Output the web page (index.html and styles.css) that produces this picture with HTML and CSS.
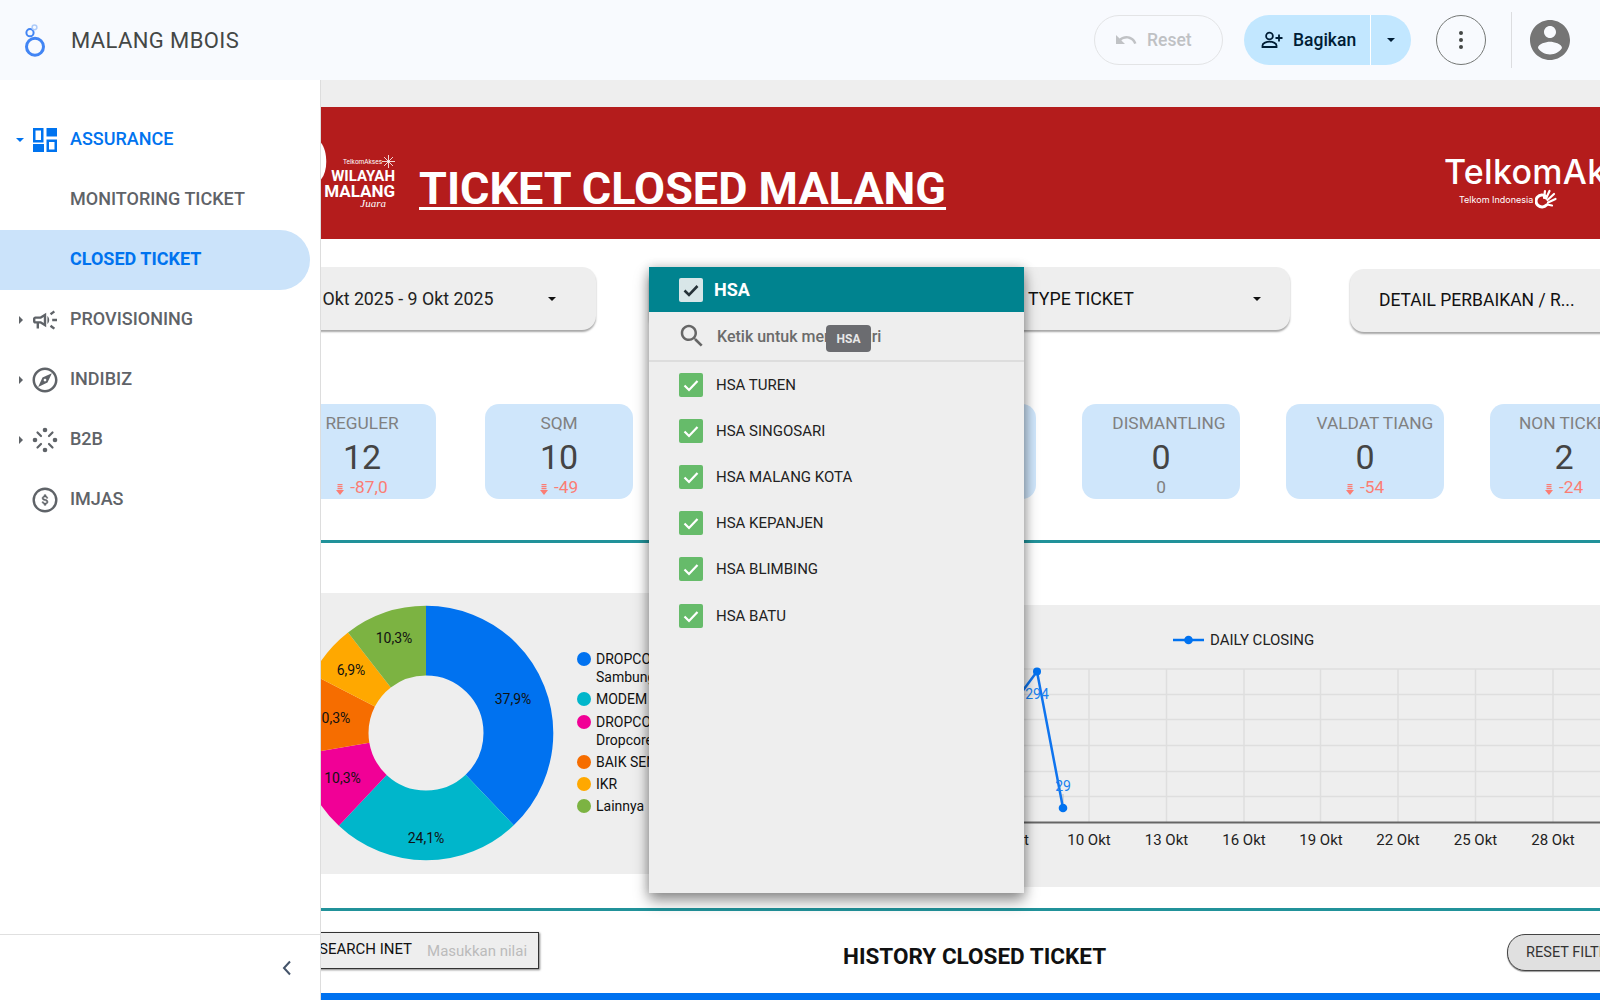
FILE: index.html
```html
<!DOCTYPE html>
<html lang="id">
<head>
    <meta charset="UTF-8">
    <title>MALANG MBOIS</title>
    <link rel="stylesheet" href="styles.css">
</head>
<body>
    <header class="topbar">
        <svg class="app-logo" viewBox="0 0 40 40" width="40" height="40">
            <circle cx="20" cy="26.700" r="8.500" fill="none" stroke="#4285f4" stroke-width="3"/>
            <circle cx="15" cy="12.700" r="3.600" fill="none" stroke="#4285f4" stroke-width="2"/>
            <circle cx="19.500" cy="7.300" r="2.400" fill="none" stroke="#aecbfa" stroke-width="1.500"/>
        </svg>
        <div class="app-title">MALANG MBOIS</div>
        <div class="topbar-actions">
            <button class="btn-reset">
                <svg viewBox="0 0 24 24" width="24" height="24"><path fill="#c0c2c5" d="M12.500 8c-2.650 0-5.050.99-6.900 2.600L2 7v9h9l-3.620-3.620c1.390-1.160 3.160-1.880 5.120-1.880 3.540 0 6.550 2.310 7.600 5.500l2.370-.78C21.080 11.030 17.150 8 12.500 8z"/></svg>
                Reset
            </button>
            <div class="btn-share">
                <div class="share-main">
                    <svg viewBox="0 0 24 24" width="24" height="24" fill="none" stroke="#001d35" stroke-width="1.800">
                        <circle cx="9.500" cy="8" r="3.400"/>
                        <path d="M2.500 19v-1.600c0-2.400 4.400-3.700 7-3.700s7 1.300 7 3.700V19z"/>
                        <path d="M19 6.500v7M15.500 10h7"/>
                    </svg>
                    Bagikan
                </div>
                <div class="share-more"><span class="caret-down caret-dark"></span></div>
            </div>
            <div class="btn-menu"><span></span><span></span><span></span></div>
            <div class="topbar-sep"></div>
            <svg class="avatar" viewBox="0 0 24 24" width="48" height="48"><path fill="#757575" d="M12 2C6.480 2 2 6.480 2 12s4.480 10 10 10 10-4.480 10-10S17.520 2 12 2zm0 3c1.660 0 3 1.340 3 3s-1.340 3-3 3-3-1.340-3-3 1.340-3 3-3zm0 14.200c-2.500 0-4.710-1.280-6-3.220.03-1.990 4-3.080 6-3.080 1.990 0 5.970 1.090 6 3.080-1.290 1.940-3.500 3.220-6 3.220z"/></svg>
        </div>
    </header>

    <div class="main">
        <aside class="sidebar">
            <nav class="nav">
                <div class="nav-item active">
                    <span class="nav-caret"><span class="caret-down"></span></span>
                    <svg class="nav-icon" viewBox="0 0 24 24" width="24" height="24" fill="#0073ef">
                        <path fill-rule="evenodd" d="M0 0h10.500v14.500H0zM2.500 2.500v9.500h5.500V2.500z"/>
                        <path d="M13.500 0H24v8.500H13.500z"/>
                        <path d="M0 16h11v8H0z"/>
                        <path fill-rule="evenodd" d="M13.500 11.500H24V24H13.500zM16 14v7.500h5.500V14z"/>
                    </svg>
                    <span class="nav-label">ASSURANCE</span>
                </div>
                <div class="nav-item sub"><span class="nav-label">MONITORING TICKET</span></div>
                <div class="nav-item sub selected"><span class="nav-label">CLOSED TICKET</span></div>
                <div class="nav-item">
                    <span class="nav-caret"><span class="caret-right"></span></span>
                    <svg class="nav-icon" viewBox="0 0 24 24" width="24" height="24"><path fill="#5f6368" transform="translate(-2.400 -2.400) scale(1.200)" d="M18 11v2h4v-2h-4zm-2 6.610c.96.71 2.210 1.650 3.200 2.390.4-.53.8-1.070 1.200-1.600-.99-.74-2.240-1.680-3.200-2.400-.4.54-.8 1.080-1.200 1.610zM20.400 5.600c-.4-.53-.8-1.070-1.200-1.600-.99.74-2.240 1.680-3.200 2.400.4.53.8 1.070 1.200 1.600.96-.72 2.210-1.650 3.200-2.400zM4 9c-1.100 0-2 .9-2 2v2c0 1.100.9 2 2 2h1v4h2v-4h1l5 3V6L8 9H4zm5.030 1.710L11 9.530v4.940l-1.970-1.180-.48-.29H4v-2h4.550l.48-.29zM15.500 12c0-1.330-.58-2.530-1.500-3.350v6.690c.92-.81 1.500-2.010 1.500-3.340z"/></svg>
                    <span class="nav-label">PROVISIONING</span>
                </div>
                <div class="nav-item">
                    <span class="nav-caret"><span class="caret-right"></span></span>
                    <svg class="nav-icon" viewBox="0 0 24 24" width="24" height="24"><path fill="#5f6368" transform="translate(-3 -3) scale(1.250)" d="M12 2C6.480 2 2 6.480 2 12s4.480 10 10 10 10-4.480 10-10S17.520 2 12 2zm0 18c-4.410 0-8-3.590-8-8s3.590-8 8-8 8 3.590 8 8-3.590 8-8 8zm-5.500-2.500l7.510-3.490L17.500 6.500 9.990 9.990 6.500 17.500zm5.500-6.600c.61 0 1.100.49 1.100 1.100s-.49 1.100-1.100 1.100-1.100-.49-1.100-1.100.49-1.100 1.100-1.100z"/></svg>
                    <span class="nav-label">INDIBIZ</span>
                </div>
                <div class="nav-item">
                    <span class="nav-caret"><span class="caret-right"></span></span>
                    <svg class="nav-icon" viewBox="0 0 24 24" width="24" height="24" fill="#5f6368" stroke="#5f6368" stroke-width="2.200" stroke-linecap="round">
                        <circle cx="12" cy="2" r="2.300" stroke="none"/>
                        <circle cx="22" cy="12" r="2.300" stroke="none"/>
                        <circle cx="12" cy="22" r="2.300" stroke="none"/>
                        <circle cx="2" cy="12" r="2.300" stroke="none"/>
                        <path d="M8 8L4.500 4.500M16 8l3.500-3.500M16 16l3.500 3.500M8 16l-3.500 3.500" fill="none"/>
                    </svg>
                    <span class="nav-label">B2B</span>
                </div>
                <div class="nav-item">
                    <span class="nav-caret"></span>
                    <svg class="nav-icon" viewBox="0 0 24 24" width="24" height="24" fill="#5f6368">
                        <circle cx="12" cy="12" r="11.300" fill="none" stroke="#5f6368" stroke-width="2.400"/>
                        <path transform="translate(3 3) scale(.75)" stroke="#5f6368" stroke-width=".7" d="M12.310 11.140c-1.770-.45-2.340-.94-2.340-1.670 0-.84.79-1.430 2.100-1.430 1.380 0 1.900.66 1.940 1.640h1.710c-.05-1.340-.87-2.570-2.490-2.970V5h-2.300v1.700c-1.530.33-2.750 1.320-2.750 2.840 0 1.820 1.510 2.730 3.720 3.260 1.980.47 2.380 1.170 2.380 1.900 0 .54-.39 1.400-2.100 1.400-1.600 0-2.230-.72-2.320-1.640H8.040c.1 1.700 1.360 2.660 2.860 2.970V19h2.340v-1.670c1.520-.29 2.720-1.160 2.730-2.770-.01-2.200-1.900-2.960-3.660-3.420z"/>
                    </svg>
                    <span class="nav-label">IMJAS</span>
                </div>
            </nav>
            <div class="sidebar-foot">
                <svg viewBox="0 0 12 16" width="12" height="16" fill="none" stroke="#44546a" stroke-width="2"><path d="M9 1.500L3 8l6 6.500"/></svg>
            </div>
        </aside>

        <section class="canvas">
            <div class="report">
                <div class="banner">
                    <div class="wil-logo">
                        <svg class="wil-swoosh" viewBox="0 0 8 42" width="7" height="42"><path fill="#fff" d="M0 0c4 5 6 13 6 22 0 8-2 15-6 20z"/></svg>
                        <div class="wil-top">TelkomAkses
                            <svg viewBox="0 0 16 16" width="13" height="13" stroke="#fff" stroke-width="1"><path d="M8 0v16M0 8h16M2.500 2.500l11 11M13.500 2.500l-11 11"/></svg>
                        </div>
                        <div class="wil-a">WILAYAH</div>
                        <div class="wil-b">MALANG</div>
                        <div class="wil-c">Juara</div>
                    </div>
                    <h1 class="banner-title">TICKET CLOSED MALANG</h1>
                    <div class="ta-logo">
                        <div class="ta-name">TelkomAkses</div>
                        <div class="ta-sub">Telkom Indonesia
                            <svg viewBox="0 0 22 20" width="22" height="20" fill="none" stroke="#fff" stroke-linecap="round">
                                <path stroke-width="3" d="M11 7.500A6 6 0 1 0 11.500 16"/>
                                <path stroke-width="2.200" d="M9 9l1-7M11 9.500L14.500 2M12.500 11L19 5M13 13.500l7.500-3.500M12 15.500l5 1"/>
                            </svg>
                        </div>
                    </div>
                </div>

                <div class="filters">
                    <div class="filter filter-date">
                        <span class="filter-text">1 Okt 2025 - 9 Okt 2025</span>
                        <span class="caret-down caret-black"></span>
                    </div>
                    <div class="filter filter-hsa"></div>
                    <div class="filter filter-type">
                        <span class="filter-text">TYPE TICKET</span>
                        <span class="caret-down caret-black"></span>
                    </div>
                    <div class="filter filter-detail">
                        <span class="filter-text">DETAIL PERBAIKAN / R...</span>
                    </div>
                </div>

                <div class="kpis">
                    <div class="kpi kpi-first">
                        <div class="kpi-title">REGULER</div>
                        <div class="kpi-num">12</div>
                        <div class="kpi-delta"><svg class="down-arrow" viewBox="0 0 8 11" width="8" height="11"><path d="M1.500 0h5v1.200h-5zM1.500 2h5v1.200h-5zM1.500 4h5v1.200h-5zM0 6h8l-4 5z"/></svg>-87,0</div>
                    </div>
                    <div class="kpi">
                        <div class="kpi-title">SQM</div>
                        <div class="kpi-num">10</div>
                        <div class="kpi-delta"><svg class="down-arrow" viewBox="0 0 8 11" width="8" height="11"><path d="M1.500 0h5v1.200h-5zM1.500 2h5v1.200h-5zM1.500 4h5v1.200h-5zM0 6h8l-4 5z"/></svg>-49</div>
                    </div>
                    <div class="kpi"></div>
                    <div class="kpi kpi-wide kpi-hidden"></div>
                    <div class="kpi kpi-wide">
                        <div class="kpi-title shift-a">DISMANTLING</div>
                        <div class="kpi-num">0</div>
                        <div class="kpi-delta flat">0</div>
                    </div>
                    <div class="kpi kpi-wide">
                        <div class="kpi-title shift-b">VALDAT TIANG</div>
                        <div class="kpi-num">0</div>
                        <div class="kpi-delta"><svg class="down-arrow" viewBox="0 0 8 11" width="8" height="11"><path d="M1.500 0h5v1.200h-5zM1.500 2h5v1.200h-5zM1.500 4h5v1.200h-5zM0 6h8l-4 5z"/></svg>-54</div>
                    </div>
                    <div class="kpi">
                        <div class="kpi-title shift-c">NON TICKET</div>
                        <div class="kpi-num">2</div>
                        <div class="kpi-delta"><svg class="down-arrow" viewBox="0 0 8 11" width="8" height="11"><path d="M1.500 0h5v1.200h-5zM1.500 2h5v1.200h-5zM1.500 4h5v1.200h-5zM0 6h8l-4 5z"/></svg>-24</div>
                    </div>
                </div>

                <div class="divider divider-a"></div>

                <div class="charts">
                    <div class="panel panel-pie">
                        <svg class="pie" viewBox="0 0 260 260" width="260" height="260">
                            <g transform="rotate(-90 130 130)" fill="none" stroke-width="69.800">
                                <circle cx="130" cy="130" r="92.400" pathLength="100" stroke="#0072f0" stroke-dasharray="37.900 62.100"/>
                                <circle cx="130" cy="130" r="92.400" pathLength="100" stroke="#00b6cb" stroke-dasharray="24.100 75.900" stroke-dashoffset="-37.900"/>
                                <circle cx="130" cy="130" r="92.400" pathLength="100" stroke="#f10096" stroke-dasharray="10.300 89.700" stroke-dashoffset="-62"/>
                                <circle cx="130" cy="130" r="92.400" pathLength="100" stroke="#f66d00" stroke-dasharray="10.300 89.700" stroke-dashoffset="-72.300"/>
                                <circle cx="130" cy="130" r="92.400" pathLength="100" stroke="#ffa800" stroke-dasharray="6.900 93.100" stroke-dashoffset="-82.600"/>
                                <circle cx="130" cy="130" r="92.400" pathLength="100" stroke="#7cb342" stroke-dasharray="10.500 89.500" stroke-dashoffset="-89.500"/>
                            </g>
                            <g class="pie-label">
                                <text x="217" y="101">37,9%</text>
                                <text x="130" y="240">24,1%</text>
                                <text x="46.500" y="180">10,3%</text>
                                <text x="36" y="120">10,3%</text>
                                <text x="55" y="72">6,9%</text>
                                <text x="98" y="40">10,3%</text>
                            </g>
                        </svg>
                        <ul class="legend">
                            <li><i class="dot c1"></i><span>DROPCORE<br>Sambungan</span></li>
                            <li><i class="dot c2"></i><span>MODEM</span></li>
                            <li><i class="dot c3"></i><span>DROPCORE<br>Dropcore</span></li>
                            <li><i class="dot c4"></i><span>BAIK SENDIRI</span></li>
                            <li><i class="dot c5"></i><span>IKR</span></li>
                            <li><i class="dot c6"></i><span>Lainnya</span></li>
                        </ul>
                    </div>
                    <div class="panel panel-line">
                        <svg class="line-chart" viewBox="971 605 629 282" width="629" height="282">
                            <g stroke="#dedede" stroke-width="1.500">
                                <path d="M971 669H1600M971 694.500H1600M971 719.500H1600M971 745.500H1600M971 771.500H1600M971 796.500H1600"/>
                                <path d="M1011.500 669V822M1089 669V822M1166.500 669V822M1244 669V822M1320.500 669V822M1398 669V822M1475.500 669V822M1553 669V822"/>
                            </g>
                            <path d="M971 822.500H1600" stroke="#666" stroke-width="2"/>
                            <path d="M1063 794V803" stroke="#bbb" stroke-width="1"/>
                            <path d="M1011.500 706L1037 671.500L1063 808" fill="none" stroke="#0f74ee" stroke-width="2.500"/>
                            <circle cx="1037" cy="671.500" r="4" fill="#0072f0"/>
                            <circle cx="1063" cy="808" r="4.300" fill="#0072f0"/>
                            <text class="point-label" x="1037" y="699">294</text>
                            <text class="point-label" x="1063" y="791">29</text>
                            <path d="M1173 640H1204" stroke="#0072f0" stroke-width="2.500"/>
                            <circle cx="1188.500" cy="640" r="4.300" fill="#0072f0"/>
                            <text class="line-legend" x="1210" y="645">DAILY CLOSING</text>
                            <g class="tick-label">
                                <text x="1011.500" y="845">7 Okt</text>
                                <text x="1089" y="845">10 Okt</text>
                                <text x="1166.500" y="845">13 Okt</text>
                                <text x="1244" y="845">16 Okt</text>
                                <text x="1321" y="845">19 Okt</text>
                                <text x="1398" y="845">22 Okt</text>
                                <text x="1475.500" y="845">25 Okt</text>
                                <text x="1553" y="845">28 Okt</text>
                            </g>
                        </svg>
                    </div>
                </div>

                <div class="divider divider-b"></div>

                <div class="history-row">
                    <div class="search-inet">
                        <span class="search-label">SEARCH INET</span>
                        <span class="search-hint">Masukkan nilai</span>
                    </div>
                    <h2 class="history-title">HISTORY CLOSED TICKET</h2>
                    <div class="btn-reset-filter">RESET FILTER</div>
                </div>

                <div class="table-head"></div>
            </div>

            <div class="dropdown">
                <div class="dd-head">
                    <span class="check check-head">
                        <svg viewBox="0 0 24 24" width="24" height="24" fill="none" stroke="#263238" stroke-width="2.600"><path d="M5.500 12.500l4.500 4.500 8.500-9"/></svg>
                    </span>
                    <span class="dd-head-label">HSA</span>
                </div>
                <div class="dd-search">
                    <svg viewBox="0 0 24 24" width="30" height="30"><path fill="#666" d="M15.500 14h-.79l-.28-.27C15.410 12.590 16 11.110 16 9.500 16 5.910 13.090 3 9.500 3S3 5.910 3 9.500 5.910 16 9.500 16c1.610 0 3.090-.59 4.230-1.570l.27.28v.79l5 4.990L20.490 19l-4.990-5zm-6 0C7.010 14 5 11.990 5 9.500S7.010 5 9.500 5 14 7.010 14 9.500 11.990 14 9.500 14z"/></svg>
                    <span class="dd-search-hint">Ketik untuk menelusuri</span>
                </div>
                <div class="dd-row"><span class="check"><svg viewBox="0 0 24 24" width="24" height="24" fill="none" stroke="#fff" stroke-width="2.200"><path d="M5.500 12.500l4.500 4.500 8.500-9"/></svg></span>HSA TUREN</div>
                <div class="dd-row"><span class="check"><svg viewBox="0 0 24 24" width="24" height="24" fill="none" stroke="#fff" stroke-width="2.200"><path d="M5.500 12.500l4.500 4.500 8.500-9"/></svg></span>HSA SINGOSARI</div>
                <div class="dd-row"><span class="check"><svg viewBox="0 0 24 24" width="24" height="24" fill="none" stroke="#fff" stroke-width="2.200"><path d="M5.500 12.500l4.500 4.500 8.500-9"/></svg></span>HSA MALANG KOTA</div>
                <div class="dd-row"><span class="check"><svg viewBox="0 0 24 24" width="24" height="24" fill="none" stroke="#fff" stroke-width="2.200"><path d="M5.500 12.500l4.500 4.500 8.500-9"/></svg></span>HSA KEPANJEN</div>
                <div class="dd-row"><span class="check"><svg viewBox="0 0 24 24" width="24" height="24" fill="none" stroke="#fff" stroke-width="2.200"><path d="M5.500 12.500l4.500 4.500 8.500-9"/></svg></span>HSA BLIMBING</div>
                <div class="dd-row"><span class="check"><svg viewBox="0 0 24 24" width="24" height="24" fill="none" stroke="#fff" stroke-width="2.200"><path d="M5.500 12.500l4.500 4.500 8.500-9"/></svg></span>HSA BATU</div>
                <div class="tooltip">HSA</div>
            </div>
        </section>
    </div>
</body>
</html>
```

FILE: styles.css
```css
* {
    box-sizing: border-box;
}
html, body {
    margin: 0;
    height: 100%;
    overflow: hidden;
}
body {
    font-family: Roboto, 'Liberation Sans', sans-serif;
    color: #222;
    background: #fff;
    display: flex;
    flex-direction: column;
}

/* top bar */
.topbar {
    height: 80px;
    flex: none;
    display: flex;
    align-items: center;
    padding: 0 26px 0 15px;
    background: #f8fafe;
}
.app-logo {
    flex: none;
}
.app-title {
    margin-left: 16px;
    font-size: 22px;
    letter-spacing: .4px;
    color: #444746;
}
.topbar-actions {
    margin-left: auto;
    display: flex;
    align-items: center;
}
.btn-reset {
    width: 129px;
    height: 50px;
    display: flex;
    align-items: center;
    gap: 9px;
    padding: 0 0 0 19px;
    background: none;
    border: 1px solid #e3e4e6;
    border-radius: 25px;
    font: 500 17.500px Roboto, sans-serif;
    color: #bfc1c4;
}
.btn-share {
    width: 167px;
    height: 50px;
    margin-left: 21px;
    display: flex;
    border-radius: 25px;
    overflow: hidden;
    background: #c2e7ff;
    color: #001d35;
    font-size: 17.500px;
    font-weight: 500;
}
.share-main {
    width: 127px;
    display: flex;
    align-items: center;
    gap: 9px;
    padding-left: 16px;
    border-right: 1px solid #fff;
}
.share-more {
    flex: 1;
    display: flex;
    align-items: center;
    justify-content: center;
}
.btn-menu {
    width: 50px;
    height: 50px;
    margin-left: 25px;
    display: flex;
    flex-direction: column;
    align-items: center;
    justify-content: center;
    gap: 3px;
    border: 1px solid #747775;
    border-radius: 50%;
}
.btn-menu span {
    width: 4px;
    height: 4px;
    border-radius: 50%;
    background: #444746;
}
.topbar-sep {
    width: 1px;
    height: 56px;
    margin: 0 14px 0 25px;
    background: #dcdde0;
}
.avatar {
    display: block;
}

/* carets */
.caret-down {
    display: inline-block;
    border-left: 4.500px solid transparent;
    border-right: 4.500px solid transparent;
    border-top: 4.500px solid #0073ef;
}
.caret-dark {
    border-top-color: #001d35;
}
.caret-black {
    border-top-color: #111;
}
.caret-right {
    display: inline-block;
    border-top: 4px solid transparent;
    border-bottom: 4px solid transparent;
    border-left: 4px solid #5f6368;
}

/* sidebar */
.main {
    flex: 1;
    display: flex;
    min-height: 0;
}
.sidebar {
    width: 321px;
    flex: none;
    display: flex;
    flex-direction: column;
    border-right: 1px solid #ddd;
    background: #fff;
}
.nav {
    padding-top: 30px;
}
.nav-item {
    width: 310px;
    height: 60px;
    display: flex;
    align-items: center;
    padding-left: 16px;
    color: #5f6368;
    font-size: 18px;
    font-weight: 500;
}
.nav-item.active {
    color: #0073ef;
}
.nav-item.sub {
    padding-left: 70px;
}
.nav-item.selected {
    color: #0073ef;
    font-weight: 700;
    background: #cbe3fa;
    border-radius: 0 30px 30px 0;
}
.nav-caret {
    width: 17px;
    display: flex;
    padding-left: 3px;
}
.active .nav-caret {
    padding-left: 0;
}
.nav-icon {
    flex: none;
    overflow: visible;
}
.nav-label {
    margin: -3px 0 0 13px;
}
.sub .nav-label {
    margin: -3px 0 0;
}
.sidebar-foot {
    margin-top: auto;
    height: 66px;
    display: flex;
    align-items: center;
    justify-content: flex-end;
    padding: 0 27px 0 0;
    border-top: 1px solid #e0e0e0;
}

/* report canvas */
.canvas {
    position: relative;
    flex: 1;
    min-width: 0;
    overflow: hidden;
    background: #eee;
    padding-top: 27px;
}
.report {
    height: 893px;
    overflow: hidden;
    background: #fff;
}
.banner {
    height: 132px;
    display: flex;
    align-items: center;
    background: #b41c1c;
}
.wil-logo {
    position: relative;
    flex: none;
    width: 74px;
    height: 90px;
    overflow: hidden;
    text-align: right;
    color: #fff;
    white-space: nowrap;
}
.wil-swoosh {
    position: absolute;
    left: 0;
    top: 12px;
}
.wil-top {
    height: 17px;
    display: flex;
    align-items: center;
    justify-content: flex-end;
    font-size: 6.500px;
    margin-top: 25px;
}
.wil-a {
    margin-top: -1px;
    font-size: 15px;
    line-height: 15px;
    font-weight: 700;
}
.wil-b {
    font-size: 17px;
    line-height: 14px;
    font-weight: 700;
}
.wil-c {
    padding-right: 9px;
    font: italic 11px 'Liberation Serif', serif;
    line-height: 11px;
}
.banner-title {
    margin: 32px 0 0 24px;
    font-size: 45px;
    line-height: 50px;
    font-weight: 700;
    color: #fff;
    white-space: nowrap;
    text-decoration: underline;
    text-decoration-thickness: 3px;
    text-underline-offset: 3px;
    flex: none;
}
.ta-logo {
    flex: none;
    margin: 16px -60px 0 auto;
    width: 216px;
    color: #fff;
}
.ta-name {
    font-family: Inter, sans-serif;
    font-size: 34px;
    line-height: 38px;
    font-weight: 500;
    letter-spacing: .3px;
    white-space: nowrap;
}
.ta-sub {
    display: flex;
    align-items: center;
    gap: 2px;
    margin-top: -2px;
    padding-left: 15px;
    font-family: Inter, sans-serif;
    font-size: 9px;
    height: 20px;
}

/* filters */
.filters {
    display: flex;
    margin-top: 28px;
    height: 65px;
}
.filter {
    flex: none;
    height: 63px;
    display: flex;
    align-items: center;
    background: #eee;
    border-radius: 14px;
    box-shadow: 0 2px 2px rgba(0, 0, 0, .35);
    font-size: 17.800px;
    color: #111;
    white-space: nowrap;
}
.filter-date {
    width: 324px;
    margin-left: -49px;
    padding-left: 36px;
    border-radius: 0 14px 14px 0;
    color: #222;
}
.filter-date .caret-down,
.filter-type .caret-down {
    margin-left: auto;
}
.filter-date .caret-down {
    margin-right: 40px;
}
.filter-hsa {
    width: 300px;
    margin-left: 53px;
}
.filter-type {
    width: 291px;
    margin-left: 50px;
    padding-left: 29px;
}
.filter-type .caret-down {
    margin-right: 29px;
}
.filter-detail {
    width: 300px;
    margin: 2px 0 0 60px;
    padding: 0 0 2px 29px;
    font-size: 17.500px;
}

/* scorecards */
.kpis {
    display: flex;
    gap: 46px;
    margin-top: 72px;
}
.kpi {
    flex: none;
    width: 148px;
    height: 95px;
    padding-top: 9px;
    display: flex;
    flex-direction: column;
    align-items: center;
    background: #cfe6fb;
    border-radius: 14px;
    margin-right: 3px;
}
.kpi-first {
    margin-left: -33px;
}
.kpi-wide {
    width: 158px;
    margin-right: 0;
}
.kpi-hidden {
    width: 157px;
}
.kpi-title {
    font-size: 17.300px;
    line-height: 20px;
    color: #808080;
    white-space: nowrap;
}
.shift-a {
    padding-left: 16px;
}
.shift-b {
    padding-left: 20px;
}
.shift-c {
    padding-left: 8px;
}
.kpi-num {
    margin-top: 4px;
    font-size: 34px;
    line-height: 40px;
    color: #444;
}
.kpi-delta {
    display: flex;
    align-items: center;
    gap: 6px;
    font-size: 17.300px;
    line-height: 21px;
    color: #fb7d74;
}
.kpi-delta.flat {
    color: #808080;
}
.down-arrow {
    fill: #fb7d74;
    margin-top: 3px;
}

.divider {
    height: 3px;
    background: #21929a;
}
.divider-a {
    margin-top: 41px;
}
.divider-b {
    margin-top: 21px;
}

/* charts */
.charts {
    display: flex;
    align-items: flex-start;
    margin-top: 50px;
    height: 294px;
}
.panel {
    flex: none;
    background: #eee;
}
.panel-pie {
    width: 640px;
    height: 281px;
    display: flex;
    padding-top: 10px;
    overflow: hidden;
}
.pie {
    flex: none;
    margin-left: -25px;
}
.pie-label text {
    font-size: 14px;
    text-anchor: middle;
    fill: #111;
}
.legend {
    list-style: none;
    margin: 47px 0 0 21px;
    padding: 0;
    font-size: 14px;
    line-height: 18px;
    color: #111;
}
.legend li {
    display: flex;
    align-items: flex-start;
    gap: 5px;
    margin-bottom: 4.300px;
}
.dot {
    flex: none;
    width: 14px;
    height: 14px;
    margin-top: 2px;
    border-radius: 50%;
}
.c1 { background: #0072f0; }
.c2 { background: #00b6cb; }
.c3 { background: #f10096; }
.c4 { background: #f66d00; }
.c5 { background: #ffa800; }
.c6 { background: #7cb342; }

.panel-line {
    width: 629px;
    height: 282px;
    margin: 12px 0 0 10px;
}
.line-chart {
    display: block;
}
.point-label {
    font-size: 14px;
    text-anchor: middle;
    fill: #1a82f0;
}
.line-legend {
    font-size: 15px;
    fill: #222;
}
.tick-label text {
    font-size: 15px;
    text-anchor: middle;
    fill: #222;
}

/* history row */
.history-row {
    display: flex;
    align-items: flex-start;
    margin-top: 21px;
    height: 42px;
}
.search-inet {
    flex: none;
    width: 240px;
    height: 37px;
    margin-left: -22px;
    display: flex;
    align-items: center;
    gap: 15px;
    padding-left: 19px;
    background: #eee;
    border: 1px solid #333;
    box-shadow: 1px 1px 2px rgba(0, 0, 0, .5);
    font-size: 15px;
    white-space: nowrap;
}
.search-label {
    color: #111;
    margin-top: -4px;
}
.search-hint {
    color: #bbb;
}
.history-title {
    flex: none;
    margin: 10px 0 0 304px;
    font-size: 22.500px;
    line-height: 28px;
    font-weight: 700;
    color: #111;
    white-space: nowrap;
}
.btn-reset-filter {
    flex: none;
    width: 150px;
    height: 37px;
    margin: 2px 0 0 401px;
    padding: 9px 0 0 18px;
    background: #e0e0e0;
    border: 1px solid #444;
    border-radius: 18px;
    box-shadow: 0 1px 1px rgba(0, 0, 0, .4);
    font-size: 14.500px;
    color: #333;
    white-space: nowrap;
}
.table-head {
    height: 7px;
    margin-top: 19px;
    background: #0072f0;
}

/* open filter list, lies over the report */
.dropdown {
    position: absolute;
    left: 328px;
    top: 187px;
    width: 375px;
    height: 626px;
    background: #eee;
    box-shadow: 0 8px 14px rgba(0, 0, 0, .4), 0 0 10px rgba(0, 0, 0, .2);
}
.dd-head {
    height: 45px;
    display: flex;
    align-items: center;
    padding-left: 30px;
    background: #00838f;
}
.check {
    flex: none;
    width: 24px;
    height: 24px;
    border-radius: 2px;
    background: #66bb6a;
}
.check svg {
    display: block;
}
.check-head {
    background: #d8e6e8;
}
.dd-head-label {
    margin-left: 11px;
    color: #fff;
    font-size: 18px;
    font-weight: 700;
}
.dd-search {
    height: 50px;
    display: flex;
    align-items: center;
    padding-left: 28px;
    border-bottom: 2px solid #ddd;
}
.dd-search-hint {
    margin-left: 10px;
    font-size: 16px;
    font-weight: 500;
    color: #6b6b6b;
}
.dd-row {
    height: 46.200px;
    display: flex;
    align-items: center;
    gap: 13px;
    padding: 0 0 1px 30px;
    font-size: 15px;
    color: #222;
}
.tooltip {
    position: absolute;
    left: 177px;
    top: 58px;
    width: 45px;
    height: 27px;
    display: flex;
    align-items: center;
    justify-content: center;
    background: #6b6c70;
    border-radius: 4px;
    color: #e8e8e8;
    font-size: 12px;
    font-weight: 700;
}
```
